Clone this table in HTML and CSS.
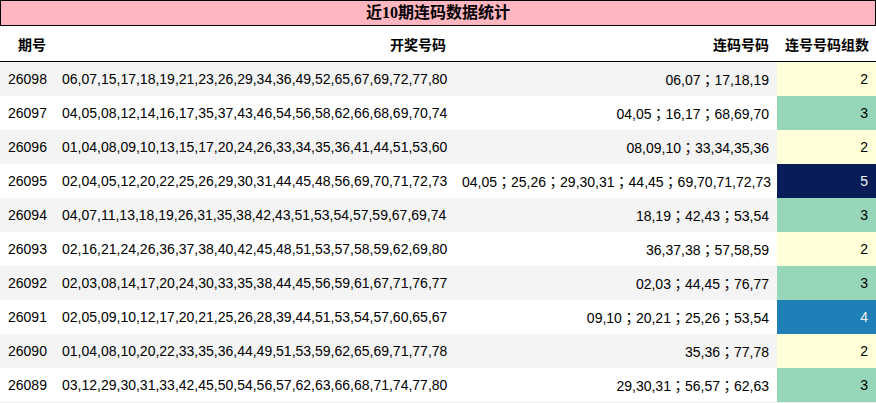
FILE: index.html
```html
<!DOCTYPE html>
<html lang="zh">
<head>
<meta charset="utf-8">
<link rel="stylesheet" href="styles.css">
</head>
<body>
<div class="title">近10期连码数据统计</div>
<table class="stats">
  <colgroup>
    <col class="c1"><col class="c2"><col class="c3"><col class="c4">
  </colgroup>
  <thead>
    <tr><th>期号</th><th>开奖号码</th><th>连码号码</th><th>连号号码组数</th></tr>
  </thead>
  <tbody>
    <tr><td>26098</td><td>06,07,15,17,18,19,21,23,26,29,34,36,49,52,65,67,69,72,77,80</td><td>06,07；17,18,19</td><td class="g2">2</td></tr>
    <tr><td>26097</td><td>04,05,08,12,14,16,17,35,37,43,46,54,56,58,62,66,68,69,70,74</td><td>04,05；16,17；68,69,70</td><td class="g3">3</td></tr>
    <tr><td>26096</td><td>01,04,08,09,10,13,15,17,20,24,26,33,34,35,36,41,44,51,53,60</td><td>08,09,10；33,34,35,36</td><td class="g2">2</td></tr>
    <tr><td>26095</td><td>02,04,05,12,20,22,25,26,29,30,31,44,45,48,56,69,70,71,72,73</td><td>04,05；25,26；29,30,31；44,45；69,70,71,72,73</td><td class="g5">5</td></tr>
    <tr><td>26094</td><td>04,07,11,13,18,19,26,31,35,38,42,43,51,53,54,57,59,67,69,74</td><td>18,19；42,43；53,54</td><td class="g3">3</td></tr>
    <tr><td>26093</td><td>02,16,21,24,26,36,37,38,40,42,45,48,51,53,57,58,59,62,69,80</td><td>36,37,38；57,58,59</td><td class="g2">2</td></tr>
    <tr><td>26092</td><td>02,03,08,14,17,20,24,30,33,35,38,44,45,56,59,61,67,71,76,77</td><td>02,03；44,45；76,77</td><td class="g3">3</td></tr>
    <tr><td>26091</td><td>02,05,09,10,12,17,20,21,25,26,28,39,44,51,53,54,57,60,65,67</td><td>09,10；20,21；25,26；53,54</td><td class="g4">4</td></tr>
    <tr><td>26090</td><td>01,04,08,10,20,22,33,35,36,44,49,51,53,59,62,65,69,71,77,78</td><td>35,36；77,78</td><td class="g2">2</td></tr>
    <tr><td>26089</td><td>03,12,29,30,31,33,42,45,50,54,56,57,62,63,66,68,71,74,77,80</td><td>29,30,31；56,57；62,63</td><td class="g3">3</td></tr>
  </tbody>
</table>
</body>
</html>
```
FILE: styles.css
```css
html, body {
  margin: 0;
  padding: 0;
  background: #ffffff;
}
body {
  width: 876px;
  font-family: "Liberation Sans", "Noto Sans CJK SC", sans-serif;
  font-size: 14px;
  color: #000;
}
.title {
  box-sizing: border-box;
  height: 26px;
  line-height: 24px;
  border: 1px solid #000;
  background: #ffb6c1;
  text-align: center;
  font-family: "Liberation Serif", "Noto Sans CJK SC", serif;
  font-weight: bold;
  font-size: 16px;
}
.stats {
  width: 876px;
  border-collapse: collapse;
  table-layout: fixed;
}
.c1 { width: 54px; }
.c2 { width: 400px; }
.c3 { width: 323px; }
.c4 { width: 99px; }
.stats th {
  height: 35px;
  padding: 0 8px;
  text-align: right;
  font-weight: bold;
  border-bottom: 1px solid #000;
  white-space: nowrap;
}
.stats td {
  height: 34px;
  padding: 0 8px;
  text-align: right;
  white-space: nowrap;
  font-family: "Liberation Sans", "Noto Sans CJK TC", sans-serif;
}
.stats tbody tr:nth-child(odd) {
  background: #f4f4f4;
}
.stats tbody tr:last-child {
  border-bottom: 1px solid #eeeeee;
}
.g2 { background: #ffffd9; color: #000; }
.g3 { background: #97d6b9; color: #000; }
.g4 { background: #1f80b8; color: #f1f1f1; }
.g5 { background: #081d58; color: #f1f1f1; }
```
